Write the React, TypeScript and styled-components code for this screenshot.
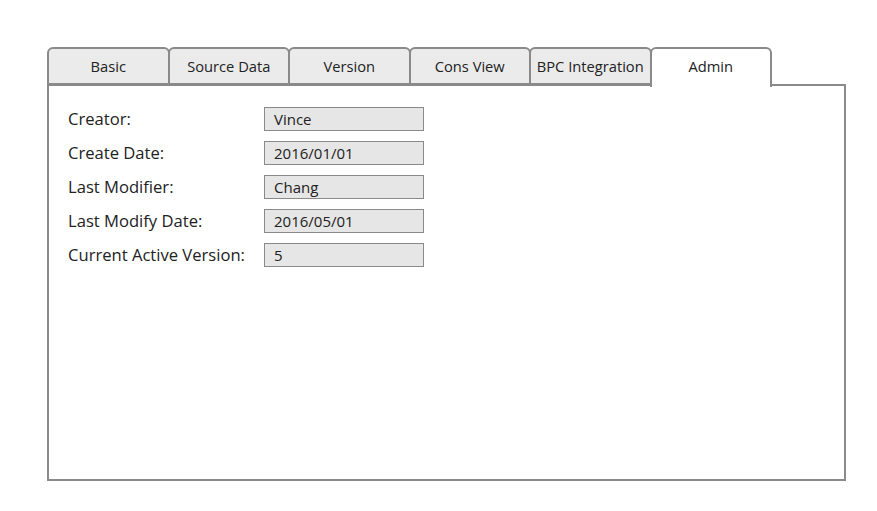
import React from 'react';
import styled, { createGlobalStyle } from 'styled-components';

const GlobalStyle = createGlobalStyle`
  html, body {
    margin: 0;
    padding: 0;
    background: #ffffff;
  }
  body {
    font-family: 'Open Sans', 'Noto Sans', sans-serif;
    color: #222;
  }
`;

const colors = {
  border: '#8a8a8a',
  tab: '#ebebeb',
  field: '#e6e6e6',
  white: '#ffffff',
  text: '#222222',
};

const Page = styled.div`
  padding: 47px 0 0 47px;
  width: 799px;
`;

const TabRow = styled.div`
  display: flex;
  height: 38px;
  position: relative;
  z-index: 1;
`;

const Tab = styled.div<{ $active?: boolean }>`
  box-sizing: border-box;
  width: 122.5px;
  height: ${p => (p.$active ? '40px' : '38px')};
  margin-left: -2px;
  &:first-child {
    margin-left: 0;
  }
  display: flex;
  align-items: center;
  justify-content: center;
  padding-bottom: ${p => (p.$active ? '4px' : '0')};
  border: 2px solid ${colors.border};
  border-bottom: ${p => (p.$active ? 'none' : `2px solid ${colors.border}`)};
  border-radius: 6px 6px 0 0;
  background: ${p => (p.$active ? colors.white : colors.tab)};
  font-size: 14.7px;
  color: ${colors.text};
  position: relative;
  z-index: ${p => (p.$active ? 2 : 1)};
`;

const Panel = styled.div`
  box-sizing: border-box;
  margin-top: -1px;
  width: 799px;
  height: 397px;
  border: 2px solid ${colors.border};
  padding: 21px 19px;
  display: flex;
  flex-direction: column;
  gap: 10px;
`;

const Row = styled.div`
  display: flex;
  align-items: center;
  height: 24px;
`;

const Label = styled.div`
  width: 196px;
  font-size: 16.6px;
  padding-bottom: 2px;
  color: ${colors.text};
`;

const Field = styled.div`
  box-sizing: border-box;
  width: 160px;
  height: 24px;
  border: 1.5px solid ${colors.border};
  background: ${colors.field};
  padding: 0 9px;
  font-size: 15px;
  line-height: 22px;
  color: ${colors.text};
`;

const tabs = ['Basic', 'Source Data', 'Version', 'Cons View', 'BPC Integration', 'Admin'];

const fields = [
  { label: 'Creator:', value: 'Vince' },
  { label: 'Create Date:', value: '2016/01/01' },
  { label: 'Last Modifier:', value: 'Chang' },
  { label: 'Last Modify Date:', value: '2016/05/01' },
  { label: 'Current Active Version:', value: '5' },
];

export default function App() {
  return (
    <>
      <GlobalStyle />
      <Page>
        <TabRow>
          {tabs.map(t => (
            <Tab key={t} $active={t === 'Admin'}>{t}</Tab>
          ))}
        </TabRow>
        <Panel>
          {fields.map(f => (
            <Row key={f.label}>
              <Label>{f.label}</Label>
              <Field>{f.value}</Field>
            </Row>
          ))}
        </Panel>
      </Page>
    </>
  );
}
